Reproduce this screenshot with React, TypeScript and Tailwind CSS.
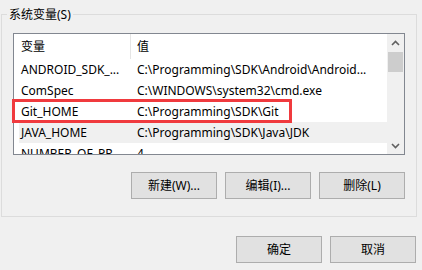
import React from "react";

const font = { fontFamily: '"Noto Sans", "Noto Sans CJK SC", sans-serif' };

function Chevron({ up }: { up: boolean }) {
  return (
    <svg width="9" height="6" viewBox="0 0 9 6">
      <path
        d={up ? "M1 5 L4.5 1.5 L8 5" : "M1 1 L4.5 4.5 L8 1"}
        fill="none"
        stroke="#606060"
        strokeWidth="1.6"
      />
    </svg>
  );
}

function Btn({ children }: { children: React.ReactNode }) {
  return (
    <div className="w-[86px] h-[27px] border border-[#adadad] bg-[#e1e1e1] flex items-center justify-center text-[12px] text-black leading-none">
      {children}
    </div>
  );
}

const rows: [string, string][] = [
  ["ANDROID_SDK_...", "C:\\Programming\\SDK\\Android\\Android..."],
  ["ComSpec", "C:\\WINDOWS\\system32\\cmd.exe"],
  ["Git_HOME", "C:\\Programming\\SDK\\Git"],
  ["JAVA_HOME", "C:\\Programming\\SDK\\Java\\JDK"],
  ["NUMBER_OF_PR", "4"],
];

export default function App() {
  return (
    <div className="w-[422px] h-[270px] bg-[#f0f0f0] overflow-hidden text-black" style={font}>
      <div className="ml-[1px] mt-[14px] w-[416px] h-[203px] border border-[#dcdcdc] relative pt-[18px] pl-[11px] pr-[11px]">
        <div className="absolute left-[5px] top-[-9px] px-[2px] bg-[#f0f0f0] text-[12px] leading-[17px]">
          系统变量(S)
        </div>
        <div className="w-[392px] h-[122px] border border-[#828790] bg-white flex relative">
          <div className="flex-1 flex flex-col overflow-hidden text-[12px]">
            <div className="h-[25px] flex items-stretch shrink-0">
              <div className="w-[116px] pl-[7px] flex items-center">变量</div>
              <div className="w-px bg-[#e5e5e5]" />
              <div className="flex-1 pl-[6px] flex items-center">值</div>
            </div>
            {rows.map(([n, v], i) => (
              <div
                key={n}
                className={
                  "h-[21px] shrink-0 ml-[5px] flex items-center whitespace-nowrap " +
                  (i === 3 ? "bg-[#f0f0f0]" : "")
                }
              >
                <div className="w-[116px] pl-[2px] overflow-hidden">{n}</div>
                <div className="flex-1 pl-[2px] overflow-hidden">{v}</div>
              </div>
            ))}
          </div>
          <div className="w-[17px] bg-[#f0f0f0] flex flex-col shrink-0">
            <div className="h-[17px] flex items-center justify-center">
              <Chevron up />
            </div>
            <div className="mt-[1px] h-[20px] mx-[1px] bg-[#cdcdcd]" />
            <div className="flex-1" />
            <div className="h-[17px] flex items-center justify-center">
              <Chevron up={false} />
            </div>
          </div>
          <div className="absolute left-[-2px] top-[65px] w-[280px] h-[24px] border-[3px] border-[#f03a3e]" />
        </div>
        <div className="mt-[17px] flex justify-end gap-[8px]">
          <Btn>新建(W)...</Btn>
          <Btn>编辑(I)...</Btn>
          <Btn>删除(L)</Btn>
        </div>
      </div>
      <div className="mt-[19px] pr-[6px] flex justify-end gap-[8px]">
        <Btn>确定</Btn>
        <Btn>取消</Btn>
      </div>
    </div>
  );
}
